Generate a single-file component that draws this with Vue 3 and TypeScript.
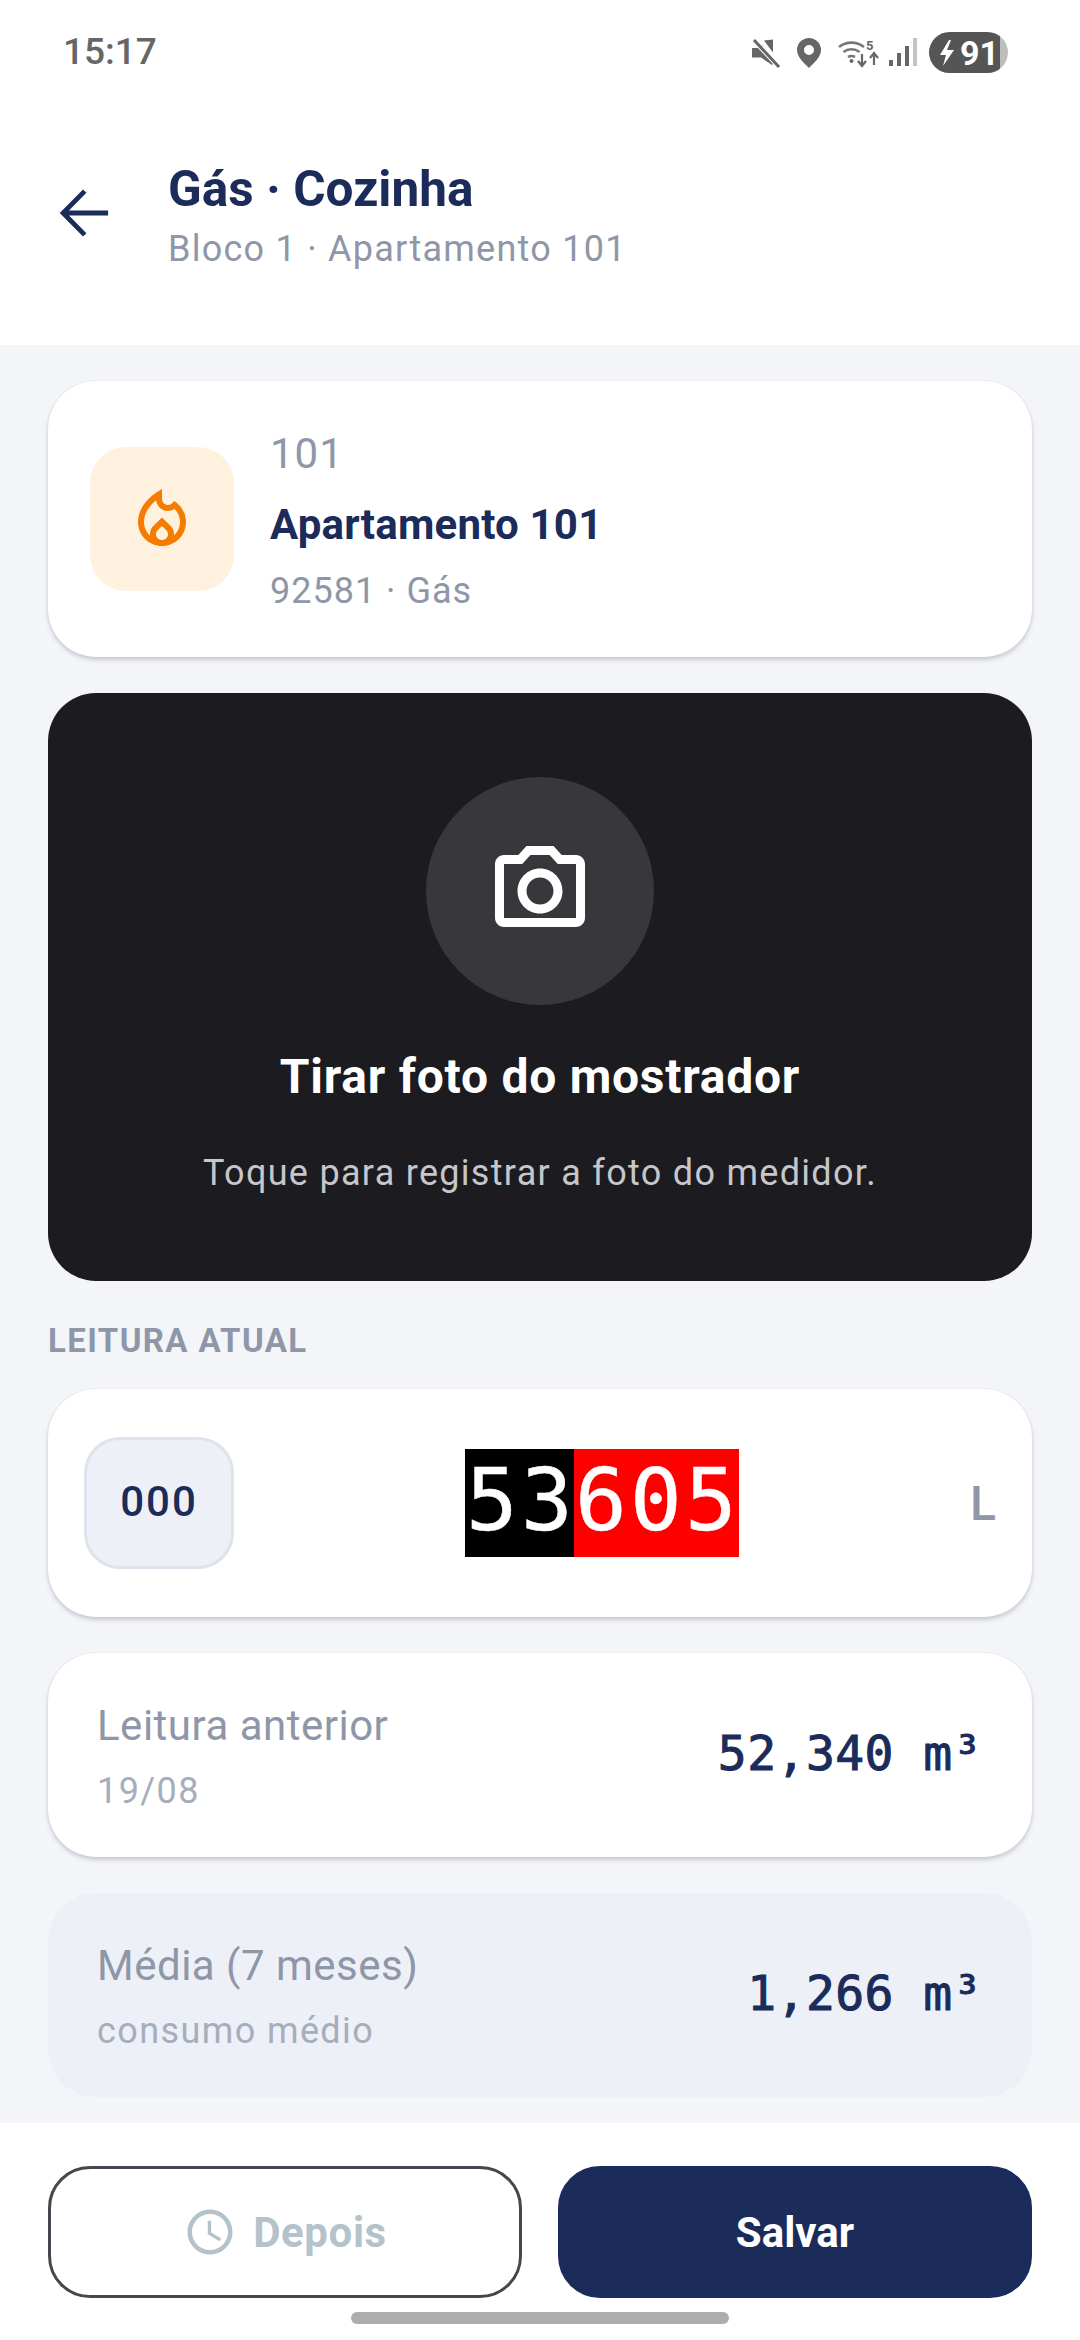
<template>
  <div class="screen">
    <div class="status">
      <span class="clock">15:17</span>
      <div class="status-icons">
        <svg class="ic-mute" width="30" height="30" viewBox="0 0 30 30">
          <path d="M1 10h6l4-3 11 13v6l-1 1L10 19.500H1z M13 2.500l9-1v13z" fill="#666" />
          <path d="M2 1l26 28" stroke="#fff" stroke-width="5" />
          <path d="M3 2l25 27" stroke="#666" stroke-width="3" />
        </svg>
        <svg class="ic-pin" width="26" height="30" viewBox="0 0 26 30">
          <path fill-rule="evenodd" d="M13 0a12 12 0 0 1 12 12c0 7-7 13-12 18C8 25 1 19 1 12A12 12 0 0 1 13 0zm0 7a5 5 0 1 0 0 10 5 5 0 0 0 0-10z" fill="#666" />
        </svg>
        <svg class="ic-wifi" width="42" height="32" viewBox="0 0 42 32">
          <g fill="none" stroke="#777" stroke-width="2.600">
            <path d="M1 10a20 20 0 0 1 25 0" />
            <path d="M5.500 15a13 13 0 0 1 16 0" />
            <path d="M10 20a7 7 0 0 1 7 0" />
          </g>
          <circle cx="13.500" cy="24" r="2" fill="#666" />
          <text x="28" y="13" class="five">5</text>
          <path d="M24 17v11m-4-4 4 5 4-5M36 28V17m-4 4 4-5 4 5" fill="none" stroke="#666" stroke-width="2.200" />
        </svg>
        <svg class="ic-signal" width="28" height="30" viewBox="0 0 28 30">
          <rect x="0" y="22" width="4" height="6" fill="#666" />
          <rect x="8" y="15" width="4" height="13" fill="#666" />
          <rect x="16" y="8" width="4" height="20" fill="#666" />
          <rect x="24" y="0" width="4" height="28" fill="#c4c4c4" />
        </svg>
        <div class="battery">
          <svg width="20" height="28" viewBox="0 0 20 28">
            <path d="M11 1 2 16h6l-3 11 11-16h-7l4-10z" fill="#fff" />
          </svg>
          <span class="battery-num">91</span>
        </div>
      </div>
    </div>

    <header class="top">
      <svg class="back" width="72" height="72" viewBox="0 0 24 24">
        <path d="M19.700 12H5.300M11.900 4.700 4.700 12l7.200 7.300" fill="none" stroke="#1b2b5a" stroke-width="1.600" />
      </svg>
      <div class="top-text">
        <div class="title">Gás · Cozinha</div>
        <div class="subtitle">Bloco 1 · Apartamento 101</div>
      </div>
    </header>

    <main class="content">
      <section class="card unit">
        <div class="unit-icon">
          <svg width="72" height="72" viewBox="0 0 24 24">
            <path d="M16 6l-.44.55c-.42.52-.98.75-1.54.75C13 7.3 12 6.52 12 5.3V2S4 6 4 13c0 4.42 3.58 8 8 8s8-3.58 8-8c0-2.96-1.61-5.62-4-7zm-4 13c-1.1 0-2-.87-2-1.940 0-.51.2-.97.57-1.340L12 14.300l1.440 1.420c.36.37.56.83.56 1.340C14 18.130 13.100 19 12 19zm3.960-1.500c.04-.36.22-1.890-1.130-3.220L12 11.500l-2.830 2.780C7.810 15.620 8 17.160 8.040 17.500 6.790 16.400 6 14.790 6 13c0-3.160 2.130-5.650 4.030-7.250.23 1.990 1.930 3.550 3.990 3.550.78 0 1.540-.23 2.180-.66C17.340 9.780 18 11.350 18 13c0 1.790-.79 3.400-2.040 4.500z" fill="#f57c00" />
          </svg>
        </div>
        <div class="unit-text">
          <div class="unit-code">101</div>
          <div class="unit-name">Apartamento 101</div>
          <div class="unit-meta">92581 · Gás</div>
        </div>
      </section>

      <section class="photo">
        <div class="photo-circle">
          <svg width="108" height="108" viewBox="0 0 24 24">
            <path d="M14.120 4l1.830 2H20v12H4V6h4.050l1.830-2h4.240M15 2H9L7.170 4H4c-1.100 0-2 .9-2 2v12c0 1.100.9 2 2 2h16c1.100 0 2-.9 2-2V6c0-1.100-.9-2-2-2h-3.170L15 2zm-3 7c1.650 0 3 1.350 3 3s-1.350 3-3 3-3-1.350-3-3 1.350-3 3-3m0-2c-2.760 0-5 2.240-5 5s2.240 5 5 5 5-2.240 5-5-2.240-5-5-5z" fill="#fff" />
          </svg>
        </div>
        <div class="photo-title">Tirar foto do mostrador</div>
        <div class="photo-sub">Toque para registrar a foto do medidor.</div>
      </section>

      <div class="section-label">LEITURA ATUAL</div>

      <section class="card reading">
        <div class="prefix">000</div>
        <div class="meter-wrap">
          <div class="meter">
            <span class="meter-black">53</span><span class="meter-red">605</span>
          </div>
        </div>
        <span class="unit-l">L</span>
      </section>

      <section class="card value-row">
        <div>
          <div class="value-label">Leitura anterior</div>
          <div class="value-sub">19/08</div>
        </div>
        <div class="value">52,340 m³</div>
      </section>

      <section class="value-row muted">
        <div>
          <div class="value-label">Média (7 meses)</div>
          <div class="value-sub">consumo médio</div>
        </div>
        <div class="value">1,266 m³</div>
      </section>
    </main>

    <footer class="bottom">
      <div class="actions">
        <button class="btn later">
          <svg width="54" height="54" viewBox="0 0 24 24">
            <path d="M11.990 2C6.470 2 2 6.480 2 12s4.470 10 9.990 10C17.520 22 22 17.520 22 12S17.520 2 11.990 2zM12 20c-4.420 0-8-3.580-8-8s3.580-8 8-8 8 3.580 8 8-3.580 8-8 8zm.5-13H11v6l5.250 3.150.75-1.230-4.500-2.670z" fill="#b4c3cb" />
          </svg>
          Depois
        </button>
        <button class="btn save">Salvar</button>
      </div>
      <div class="home-bar"></div>
    </footer>
  </div>
</template>

<script setup lang="ts"></script>

<style>
body {
  margin: 0;
}
</style>

<style scoped>
.screen {
  width: 1080px;
  height: 2340px;
  display: flex;
  flex-direction: column;
  background: #f3f5f9;
  font-family: Roboto, "Liberation Sans", sans-serif;
  overflow: hidden;
}

.status {
  height: 105px;
  box-sizing: border-box;
  background: #fff;
  display: flex;
  align-items: center;
  justify-content: space-between;
  padding: 0 72px 0 63px;
}
.clock {
  font-size: 37px;
  font-weight: 500;
  color: #666;
  margin-bottom: 3px;
}
.status-icons {
  display: flex;
  align-items: center;
}
.ic-mute {
  margin-right: 15px;
}
.ic-pin {
  margin-right: 16px;
}
.ic-wifi {
  margin-right: 9px;
}
.ic-signal {
  margin-right: 12px;
}
.five {
  font-size: 13px;
  font-weight: 700;
  fill: #666;
  font-family: Roboto, sans-serif;
}
.battery {
  width: 79px;
  height: 41px;
  box-sizing: border-box;
  border-radius: 21px;
  background: linear-gradient(90deg, #555 90%, #bdbdbd 90%);
  display: flex;
  align-items: center;
  padding-left: 9px;
  gap: 2px;
}
.battery-num {
  font-size: 34px;
  font-weight: 700;
  color: #fff;
}

.top {
  height: 240px;
  box-sizing: border-box;
  background: #fff;
  display: flex;
  align-items: flex-start;
  padding: 72px 0 0 49px;
}
.top-text {
  margin-left: 47px;
  margin-top: -21px;
}
.title {
  font-size: 49.500px;
  line-height: 66px;
  font-weight: 700;
  color: #1b2b5a;
}
.subtitle {
  font-size: 36px;
  line-height: 54px;
  letter-spacing: 1.250px;
  color: #8e96a8;
}

.content {
  flex: 1;
  display: flex;
  flex-direction: column;
  padding: 36px 48px 0;
}
.card {
  background: #fff;
  border-radius: 48px;
  box-shadow: 0 3px 4px rgba(40, 45, 70, 0.2), 0 0 2px rgba(40, 45, 70, 0.1);
}

.unit {
  height: 276px;
  box-sizing: border-box;
  display: flex;
  align-items: center;
  padding: 0 42px;
  gap: 36px;
}
.unit-icon {
  width: 144px;
  height: 144px;
  border-radius: 36px;
  background: #fff1de;
  display: flex;
  align-items: center;
  justify-content: center;
}
.unit-text {
  padding-top: 6px;
}
.unit-code {
  font-size: 42px;
  line-height: 60px;
  letter-spacing: 1px;
  color: #8e96a8;
}
.unit-name {
  font-size: 42px;
  line-height: 72px;
  margin-top: 5px;
  font-weight: 700;
  letter-spacing: 0.200px;
  color: #1b2b5a;
}
.unit-meta {
  font-size: 36px;
  line-height: 58px;
  margin-top: 1px;
  letter-spacing: 1px;
  color: #8e96a8;
}

.photo {
  margin-top: 36px;
  height: 588px;
  box-sizing: border-box;
  border-radius: 48px;
  background: #1c1b1f;
  display: flex;
  flex-direction: column;
  align-items: center;
  padding-top: 84px;
}
.photo-circle {
  width: 228px;
  height: 228px;
  border-radius: 50%;
  background: #38383c;
  display: flex;
  align-items: center;
  justify-content: center;
}
.photo-title {
  margin-top: 42px;
  font-size: 48px;
  line-height: 60px;
  font-weight: 700;
  letter-spacing: 0.750px;
  color: #fff;
}
.photo-sub {
  margin-top: 42px;
  font-size: 36px;
  line-height: 48px;
  letter-spacing: 1.300px;
  color: #c6c6cb;
}

.section-label {
  height: 108px;
  box-sizing: border-box;
  padding-top: 42px;
  font-size: 33px;
  line-height: 36px;
  font-weight: 700;
  letter-spacing: 1.400px;
  color: #8e96a8;
}

.reading {
  height: 228px;
  box-sizing: border-box;
  display: flex;
  align-items: center;
  padding: 0 36px;
}
.prefix {
  width: 150px;
  height: 132px;
  box-sizing: border-box;
  border: 3px solid #dfe3ee;
  border-radius: 36px;
  background: #edf0f7;
  display: flex;
  align-items: center;
  justify-content: center;
  padding-bottom: 4px;
  font-size: 42px;
  font-weight: 500;
  letter-spacing: 2px;
  color: #1b2b5a;
}
.meter-wrap {
  flex: 1;
  display: flex;
  justify-content: center;
}
.meter {
  display: flex;
  height: 108px;
  font-family: "DejaVu Sans Mono", monospace;
  font-size: 86px;
  line-height: 103px;
  letter-spacing: 3.200px;
  -webkit-text-stroke: 0.500px #fff;
  color: #fff;
}
.meter-black {
  width: 109px;
  box-sizing: border-box;
  padding-left: 1px;
  background: #000;
}
.meter-red {
  width: 165px;
  box-sizing: border-box;
  padding-left: 1px;
  background: #f00;
}
.unit-l {
  font-size: 48px;
  font-weight: 500;
  color: #8e96a8;
}

.value-row {
  height: 204px;
  margin-top: 36px;
  box-sizing: border-box;
  display: flex;
  align-items: center;
  justify-content: space-between;
  padding: 0 50px 0 49px;
}
.muted {
  background: #edf0f7;
  border-radius: 48px;
}
.value-label {
  font-size: 42px;
  line-height: 60px;
  letter-spacing: 0.500px;
  color: #8e96a8;
}
.value-sub {
  margin-top: 11px;
  font-size: 36px;
  line-height: 48px;
  letter-spacing: 1.400px;
  color: #a6adbb;
}
.value {
  margin-bottom: 4px;
  font-family: "DejaVu Sans Mono", monospace;
  font-size: 48px;
  letter-spacing: 0.450px;
  -webkit-text-stroke: 1px #1b2b5a;
  color: #1b2b5a;
}

.bottom {
  height: 217px;
  box-sizing: border-box;
  background: #fff;
  padding: 43px 48px 0;
}
.actions {
  display: flex;
  gap: 36px;
}
.btn {
  flex: 1;
  height: 132px;
  border-radius: 42px;
  display: flex;
  align-items: center;
  justify-content: center;
  font-family: inherit;
  font-size: 42px;
  font-weight: 700;
  padding: 0;
}
.later {
  gap: 16px;
  border: 3px solid #49454f;
  background: #fff;
  letter-spacing: 0.600px;
  color: #b4c3cb;
}
.save {
  border: 3px solid #1b2b5a;
  background: #1b2b5a;
  color: #fff;
}
.home-bar {
  width: 378px;
  height: 12px;
  margin: 14px auto 0;
  border-radius: 6px;
  background: #adadad;
}
</style>
